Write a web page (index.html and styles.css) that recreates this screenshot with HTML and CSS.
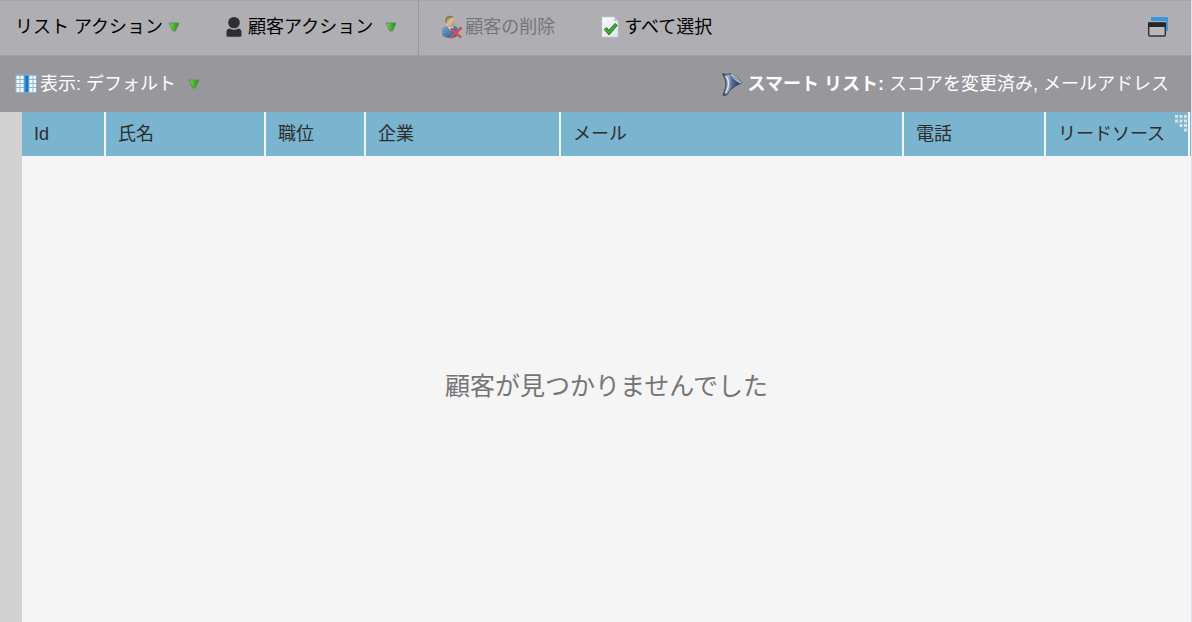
FILE: index.html
```html
<!DOCTYPE html>
<html lang="ja">
<head>
<meta charset="utf-8">
<title>顧客リスト</title>
<link rel="stylesheet" href="styles.css">
</head>
<body>
<svg class="defs" aria-hidden="true">
  <defs>
    <linearGradient id="green" x1="0" x2="1" y1="0" y2="0"><stop offset="0" stop-color="#82dc68"/><stop offset=".5" stop-color="#46b52c"/><stop offset="1" stop-color="#25831a"/></linearGradient>
    <linearGradient id="steel" x1="0" x2="1" y1="0" y2="0"><stop offset="0" stop-color="#2c3a55"/><stop offset=".3" stop-color="#9fb3cd"/><stop offset=".5" stop-color="#54698e"/><stop offset="1" stop-color="#243657"/></linearGradient>
    <linearGradient id="shirt" x1="0" x2="1" y1="0" y2="1"><stop offset="0" stop-color="#7fa6d0"/><stop offset="1" stop-color="#2a5488"/></linearGradient>
    <linearGradient id="skin" x1="0" x2="1" y1="0" y2="1"><stop offset="0" stop-color="#8a7656"/><stop offset=".5" stop-color="#d8bd96"/><stop offset="1" stop-color="#a68860"/></linearGradient>
    <linearGradient id="page" x1="0" x2="1" y1="0" y2="1"><stop offset="0" stop-color="#f8fbfd"/><stop offset="1" stop-color="#dde6ee"/></linearGradient>
    <symbol id="caret" viewBox="0 0 12 10"><path d="M1 1h10L7.500 9H4.900z" fill="url(#green)" stroke="#5d9452" stroke-width="1" stroke-linejoin="round"/></symbol>
  </defs>
</svg>
<div class="panel">
  <header class="toolbar">
    <button class="tool tool-list" type="button">リスト アクション<svg class="caret"><use href="#caret"/></svg></button>
    <button class="tool tool-person" type="button">
      <svg class="icon-person" viewBox="0 0 18 22"><ellipse cx="9" cy="6.600" rx="5.800" ry="5.700" fill="#2f2f31"/><path d="M1.500 19.500v-3.500q0-3 3-3.500Q9 15 13.500 12.500q3 .5 3 3.500v3.500q0 1.200-1.500 1.200H3q-1.500 0-1.500-1.200z" fill="#2f2f31"/></svg>
      <span>顧客アクション</span>
      <svg class="caret caret-spaced"><use href="#caret"/></svg>
    </button>
    <span class="divider"></span>
    <button class="tool tool-delete" type="button" disabled>
      <svg class="icon-delete" viewBox="0 0 22 24"><path d="M1 15q1-4 6-4.500l4 3 2-3q4 1 4 5v5q-4 3-9 2.500-5-.5-7-3z" fill="url(#shirt)"/><path d="M6.500 11l3 5 3-5z" fill="#e3e7ec"/><ellipse cx="9" cy="6.500" rx="5" ry="6" fill="url(#skin)"/><path d="M4.200 7Q3.500 1 9 .8q3 0 4 2-5-.5-6.500 1.500-1 1.500-1 4z" fill="#8d7d60"/><path d="M9.500 13.500l10.500 9M20.500 12.500l-11 10.500" fill="none" stroke="#c65459" stroke-width="2.600"/></svg>
      <span>顧客の削除</span>
    </button>
    <button class="tool tool-select" type="button">
      <svg class="icon-check" viewBox="0 0 18 22"><path d="M1 1h12l4 4v16H1z" fill="url(#page)" stroke="#c2ccd6" stroke-width=".6"/><path d="M13 1v4h4z" fill="#bdcbd8"/><path d="M3.200 13.500l2.300-2 2.500 2.700 6-6.700 2.300 1.800-8.200 9.700z" fill="#42a82f" stroke="#226f18" stroke-width=".9" stroke-linejoin="round"/></svg>
      <span>すべて選択</span>
    </button>
    <button class="tool tool-window" type="button" aria-label="新しいウィンドウ">
      <svg class="icon-window" viewBox="0 0 22 22"><path d="M4 1h17v14h-2V5H4z" fill="#3798dd"/><rect x="1.700" y="7" width="16.600" height="13" rx="1" fill="#b9b9bd" stroke="#333336" stroke-width="1.500"/><path d="M1 6.500h18V11H1z" fill="#272729"/></svg>
    </button>
  </header>
  <div class="viewbar">
    <button class="tool tool-view" type="button">
      <svg class="icon-grid" viewBox="0 0 22 20"><rect x=".5" y=".5" width="21" height="18.500" rx="1" fill="#8fb5d4"/><path d="M1.500 2h3v3h-3zM5.500 2h3v3h-3zM14.500 2h3v3h-3zM18.500 2h2.500v3h-2.500zM1.500 6h3v3h-3zM5.500 6h3v3h-3zM14.500 6h3v3h-3zM18.500 6h2.500v3h-2.500zM1.500 10h3v3h-3zM5.500 10h3v3h-3zM14.500 10h3v3h-3zM18.500 10h2.500v3h-2.500zM1.500 14h3v4h-3zM5.500 14h3v4h-3zM14.500 14h3v4h-3zM18.500 14h2.500v4h-2.500z" fill="#f4f8fb"/><path d="M9 1h5v17.500H9z" fill="#4a9fdd"/><path d="M10.500 2h2.500v16h-2.500z" fill="#1d74bd"/></svg>
      <span>表示: デフォルト</span>
      <svg class="caret caret-spaced"><use href="#caret"/></svg>
    </button>
    <div class="smart">
      <svg class="icon-funnel" viewBox="0 0 22 24"><path d="M1.500 1.500Q3.500 3 10 1.800q7.500 3.200 10.500 9.200Q14 13.500 9 18l-3 5-4 .3L5 14Q5.500 8 1.500 1.500z" fill="url(#steel)" stroke="#2a3850" stroke-width=".8"/><path d="M10 2q7 3 10 9Q13.500 9 10 2z" fill="#7c90b0" stroke="#d5deea" stroke-width=".8"/><path d="M4.500 4q4.500 5 2.500 11l-2.500 6" fill="none" stroke="#dfe8f2" stroke-width="1.300"/></svg>
      <p class="smart-text"><strong>スマート リスト:</strong> スコアを変更済み, メールアドレス</p>
    </div>
  </div>
  <main class="content">
    <table class="grid">
      <colgroup><col class="c-id"><col class="c-name"><col class="c-title"><col class="c-company"><col><col class="c-phone"><col class="c-source"></colgroup>
      <thead>
        <tr><th>Id</th><th>氏名</th><th>職位</th><th>企業</th><th>メール</th><th>電話</th><th class="last">リードソース<svg class="dots" viewBox="0 0 12 17"><path d="M0 0h3v3H0zM4.500 0h3v3h-3zM9 0h3v3H9zM0 4.500h3v3H0zM4.500 4.500h3v3h-3zM9 4.500h3v3H9zM4.500 9h3v3h-3zM9 9h3v3H9zM9 13.500h3v3H9z" fill="#dcdfe3"/></svg></th></tr>
      </thead>
      <tbody><tr><td class="empty" colspan="7">顧客が見つかりませんでした</td></tr></tbody>
    </table>
  </main>
</div>
</body>
</html>
```
FILE: styles.css
```css
* { box-sizing: border-box; }
body {
  margin: 0;
  background: #f5f5f5;
  color: #000;
  font: 18px/26px "Liberation Sans", "Noto Sans CJK JP", sans-serif;
}
.defs { position: absolute; width: 0; height: 0; }
svg { display: block; flex: none; }
.panel {
  min-height: 100vh;
  display: flex;
  flex-direction: column;
  border-right: 1px solid #dfe0f2;
}
.toolbar, .viewbar {
  display: flex;
  align-items: center;
  height: 56px;
  padding: 0 22px 0 15px;
}
.toolbar {
  background: #afaeb3;
  border-top: 1px solid #a5a4a9;
  border-bottom: 1px solid #a09fa4;
  padding-bottom: 2px;
}
.viewbar {
  background: #98979c;
  color: #fff;
  justify-content: space-between;
}
.tool {
  display: flex;
  align-items: center;
  padding: 0;
  border: 0;
  background: none;
  color: inherit;
  font: inherit;
  white-space: nowrap;
}
.caret { width: 12px; height: 10px; margin-left: 5px; }
.caret-spaced { margin-left: 12px; }
.tool-person { margin-left: 45px; }
.icon-person { width: 18px; height: 22px; margin-right: 5px; }
.divider { width: 1px; align-self: stretch; margin: 0 22px -2px 21px; background: #98979c; }
.tool-delete { color: #77767a; }
.icon-delete { width: 22px; height: 24px; margin-right: 2px; }
.tool-select { margin-left: 46px; }
.icon-check { width: 18px; height: 22px; margin-right: 5px; }
.tool-window { margin-left: auto; }
.icon-window { width: 22px; height: 22px; }
.icon-grid { width: 22px; height: 20px; margin-right: 3px; }
.smart { display: flex; align-items: center; gap: 5px; }
.smart-text { margin: 0; white-space: nowrap; }
.icon-funnel { width: 22px; height: 24px; }
.content { flex: 1; display: flex; border-left: 22px solid #d2d2d2; }
.grid { width: 100%; table-layout: fixed; border-collapse: separate; border-spacing: 0; }
.c-id { width: 84px; }
.c-name { width: 160px; }
.c-title { width: 100px; }
.c-company { width: 195px; }
.c-phone { width: 142px; }
.c-source { width: 145px; }
.grid th {
  height: 44px;
  padding: 0 0 0 12px;
  background: #7ab4ce;
  border-right: 2px solid #f5f5f5;
  color: #2d2d2d;
  font-weight: 400;
  text-align: left;
  white-space: nowrap;
}
.grid .last { position: relative; border-right: 0; }
.last::after {
  content: "";
  position: absolute;
  top: 0;
  bottom: 0;
  right: 1px;
  width: 2px;
  background: #f5f5f5;
}
.dots { position: absolute; top: 3px; right: 4px; width: 12px; height: 17px; }
.empty {
  padding: 0 0 6px;
  color: #757575;
  font-size: 25px;
  line-height: 38px;
  text-align: center;
  vertical-align: middle;
}
```
